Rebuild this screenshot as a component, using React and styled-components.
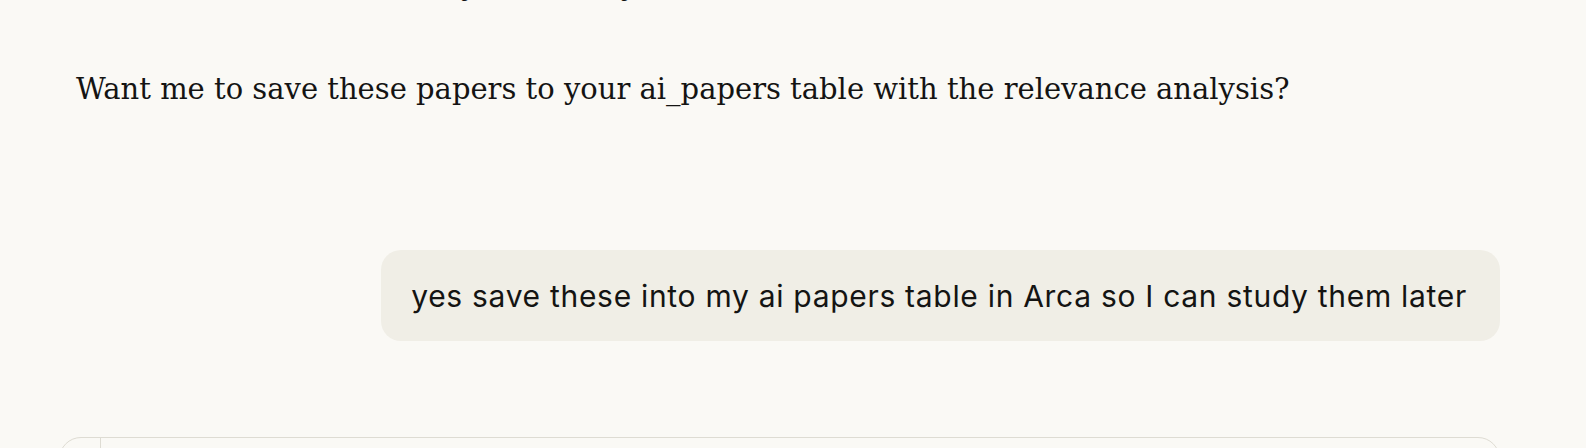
import React from "react";
import styled, { createGlobalStyle } from "styled-components";

const Global = createGlobalStyle`
  html, body { margin: 0; padding: 0; background: #faf9f5; overflow: hidden; }
  body { -webkit-font-smoothing: antialiased; }
`;

const Page = styled.div`
  width: 1586px;
  height: 448px;
  overflow: hidden;
  background: #faf9f5;
`;

const Column = styled.div`
  margin-left: 59px;
  width: 1441px;
  display: flex;
  flex-direction: column;
`;

const Prose = styled.p`
  margin: 0;
  padding-left: 17px;
  font-family: "DejaVu Serif", "Liberation Serif", serif;
  font-size: 29px;
  line-height: 40px;
  color: #141413;
  white-space: nowrap;
`;

const PrevProse = styled(Prose)`
  margin-top: -35px;
`;

const Answer = styled(Prose)`
  margin-top: 64px;
`;

const UserRow = styled.div`
  display: flex;
  justify-content: flex-end;
  margin-top: 141px;
`;

const Bubble = styled.div`
  background: #f0eee6;
  border-radius: 20px;
  padding: 0 33px 0 30px;
  height: 91px;
  display: flex;
  align-items: center;
  font-family: Inter, "Noto Sans", sans-serif;
  font-size: 30px;
  letter-spacing: 0.7px;
  color: #141413;
  white-space: nowrap;
`;

const Composer = styled.div`
  margin-top: 96px;
  height: 120px;
  border: 1px solid #dedcd3;
  border-radius: 22px;
  display: flex;
`;

const Gutter = styled.div`
  width: 40px;
  border-right: 1px solid #dedcd3;
`;

export default function App() {
  return (
    <Page>
      <Global />
      <Column>
        <PrevProse>I think these are all exactly the ones you want.</PrevProse>
        <Answer>Want me to save these papers to your ai_papers table with the relevance analysis?</Answer>
        <UserRow>
          <Bubble>yes save these into my ai papers table in Arca so I can study them later</Bubble>
        </UserRow>
        <Composer>
          <Gutter />
        </Composer>
      </Column>
    </Page>
  );
}
